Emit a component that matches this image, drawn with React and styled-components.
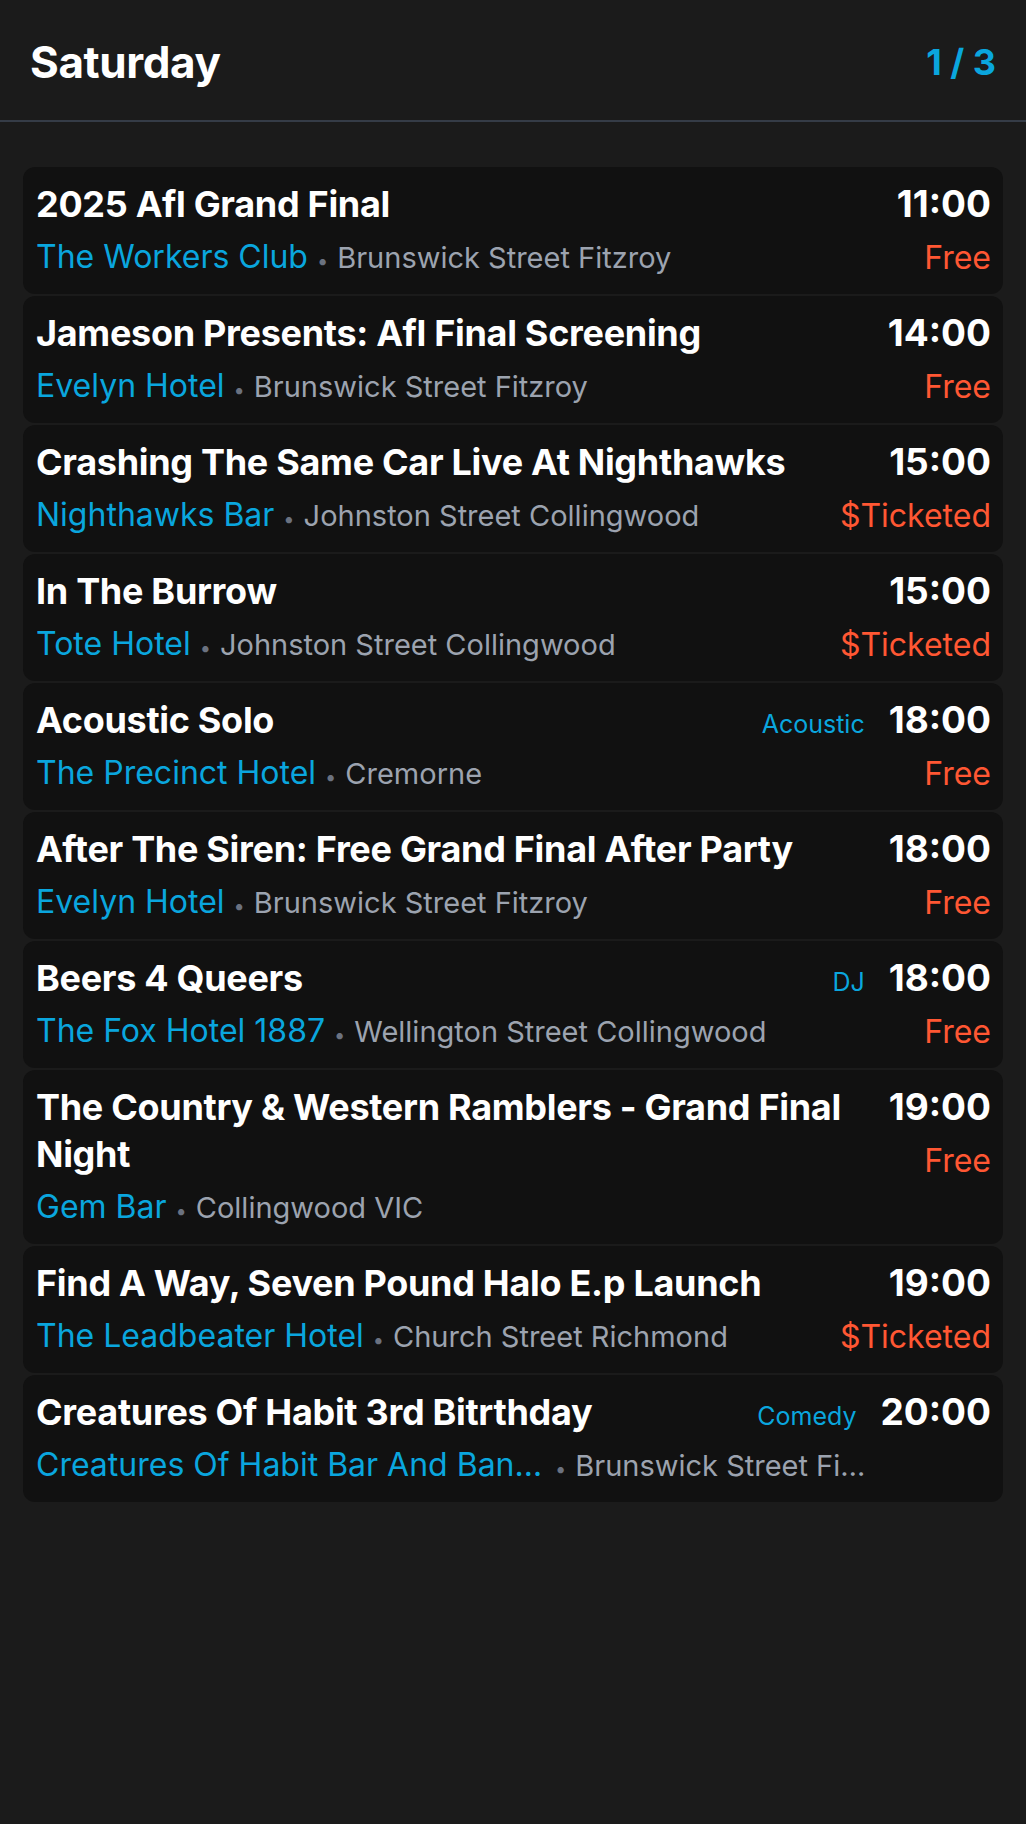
import React from "react";
import styled, { createGlobalStyle } from "styled-components";

const GlobalStyle = createGlobalStyle`
  html, body {
    margin: 0;
    padding: 0;
    background: #1b1b1b;
  }
  body {
    font-family: Inter, "Noto Sans", "Liberation Sans", sans-serif;
    color: #ffffff;
  }
`;

const Page = styled.div`
  min-height: 1824px;
  background: #1b1b1b;
`;

const Header = styled.header`
  height: 120px;
  display: flex;
  align-items: center;
  justify-content: space-between;
  padding: 0 30px;
  border-bottom: 2px solid #353c47;
`;

const DayTitle = styled.h1`
  margin: 0;
  padding-top: 3px;
  font-size: 44px;
  font-weight: 700;
  letter-spacing: -0.4px;
`;

const PageCount = styled.span`
  padding-top: 3px;
  font-size: 36px;
  font-weight: 700;
  color: #0aa6de;
`;

const List = styled.div`
  display: flex;
  flex-direction: column;
  gap: 2px;
  padding: 45px 23px;
`;

const Card = styled.div`
  position: relative;
  background: #111111;
  border-radius: 12px;
  padding: 13px 12px 18px 13px;
`;

const TopRow = styled.div`
  display: flex;
  align-items: baseline;
  gap: 24px;
`;

const Title = styled.div`
  flex: 1;
  min-width: 0;
  font-size: 36px;
  line-height: 47px;
  font-weight: 700;
  letter-spacing: -0.3px;
`;

const Tag = styled.span`
  font-size: 25px;
  color: #0aa6de;
  white-space: nowrap;
`;

const Time = styled.span`
  font-size: 37px;
  line-height: 47px;
  font-weight: 700;
  white-space: nowrap;
`;

const MetaRow = styled.div`
  display: flex;
  align-items: baseline;
  height: 38px;
  margin-top: 10px;
  padding-right: 122px;
  line-height: 38px;
  white-space: nowrap;
  min-width: 0;
`;

const Venue = styled.span`
  flex-shrink: 0;
  max-width: 510px;
  font-size: 32px;
  color: #0aa6de;
  overflow: hidden;
  text-overflow: ellipsis;
`;

const Dot = styled.span`
  flex-shrink: 0;
  margin: 0 9px;
  font-size: 20px;
  color: #6b7280;
`;

const Address = styled.span`
  min-width: 0;
  font-size: 29px;
  color: #9ca3af;
  overflow: hidden;
  text-overflow: ellipsis;
`;

const Price = styled.span`
  position: absolute;
  right: 12px;
  top: 72px;
  font-size: 32px;
  line-height: 38px;
  color: #ff5733;
`;

const events = [
  { title: "2025 Afl Grand Final", time: "11:00", venue: "The Workers Club", address: "Brunswick Street Fitzroy", price: "Free" },
  { title: "Jameson Presents: Afl Final Screening", time: "14:00", venue: "Evelyn Hotel", address: "Brunswick Street Fitzroy", price: "Free" },
  { title: "Crashing The Same Car Live At Nighthawks", time: "15:00", venue: "Nighthawks Bar", address: "Johnston Street Collingwood", price: "$Ticketed" },
  { title: "In The Burrow", time: "15:00", venue: "Tote Hotel", address: "Johnston Street Collingwood", price: "$Ticketed" },
  { title: "Acoustic Solo", tag: "Acoustic", time: "18:00", venue: "The Precinct Hotel", address: "Cremorne", price: "Free" },
  { title: "After The Siren: Free Grand Final After Party", time: "18:00", venue: "Evelyn Hotel", address: "Brunswick Street Fitzroy", price: "Free" },
  { title: "Beers 4 Queers", tag: "DJ", time: "18:00", venue: "The Fox Hotel 1887", address: "Wellington Street Collingwood", price: "Free" },
  { title: "The Country & Western Ramblers - Grand Final Night", time: "19:00", venue: "Gem Bar", address: "Collingwood VIC", price: "Free" },
  { title: "Find A Way, Seven Pound Halo E.p Launch", time: "19:00", venue: "The Leadbeater Hotel", address: "Church Street Richmond", price: "$Ticketed" },
  { title: "Creatures Of Habit 3rd Bitrthday", tag: "Comedy", time: "20:00", venue: "Creatures Of Habit Bar And Banquet", address: "Brunswick Street Fitzroy" },
];

const EventCard = ({ event }) => (
  <Card>
    <TopRow>
      <Title>{event.title}</Title>
      {event.tag && <Tag>{event.tag}</Tag>}
      <Time>{event.time}</Time>
    </TopRow>
    <MetaRow>
      <Venue>{event.venue}</Venue>
      <Dot>•</Dot>
      <Address>{event.address}</Address>
    </MetaRow>
    {event.price && <Price>{event.price}</Price>}
  </Card>
);

export default function App() {
  return (
    <Page>
      <GlobalStyle />
      <Header>
        <DayTitle>Saturday</DayTitle>
        <PageCount>1 / 3</PageCount>
      </Header>
      <List>
        {events.map((event, i) => (
          <EventCard key={i} event={event} />
        ))}
      </List>
    </Page>
  );
}
